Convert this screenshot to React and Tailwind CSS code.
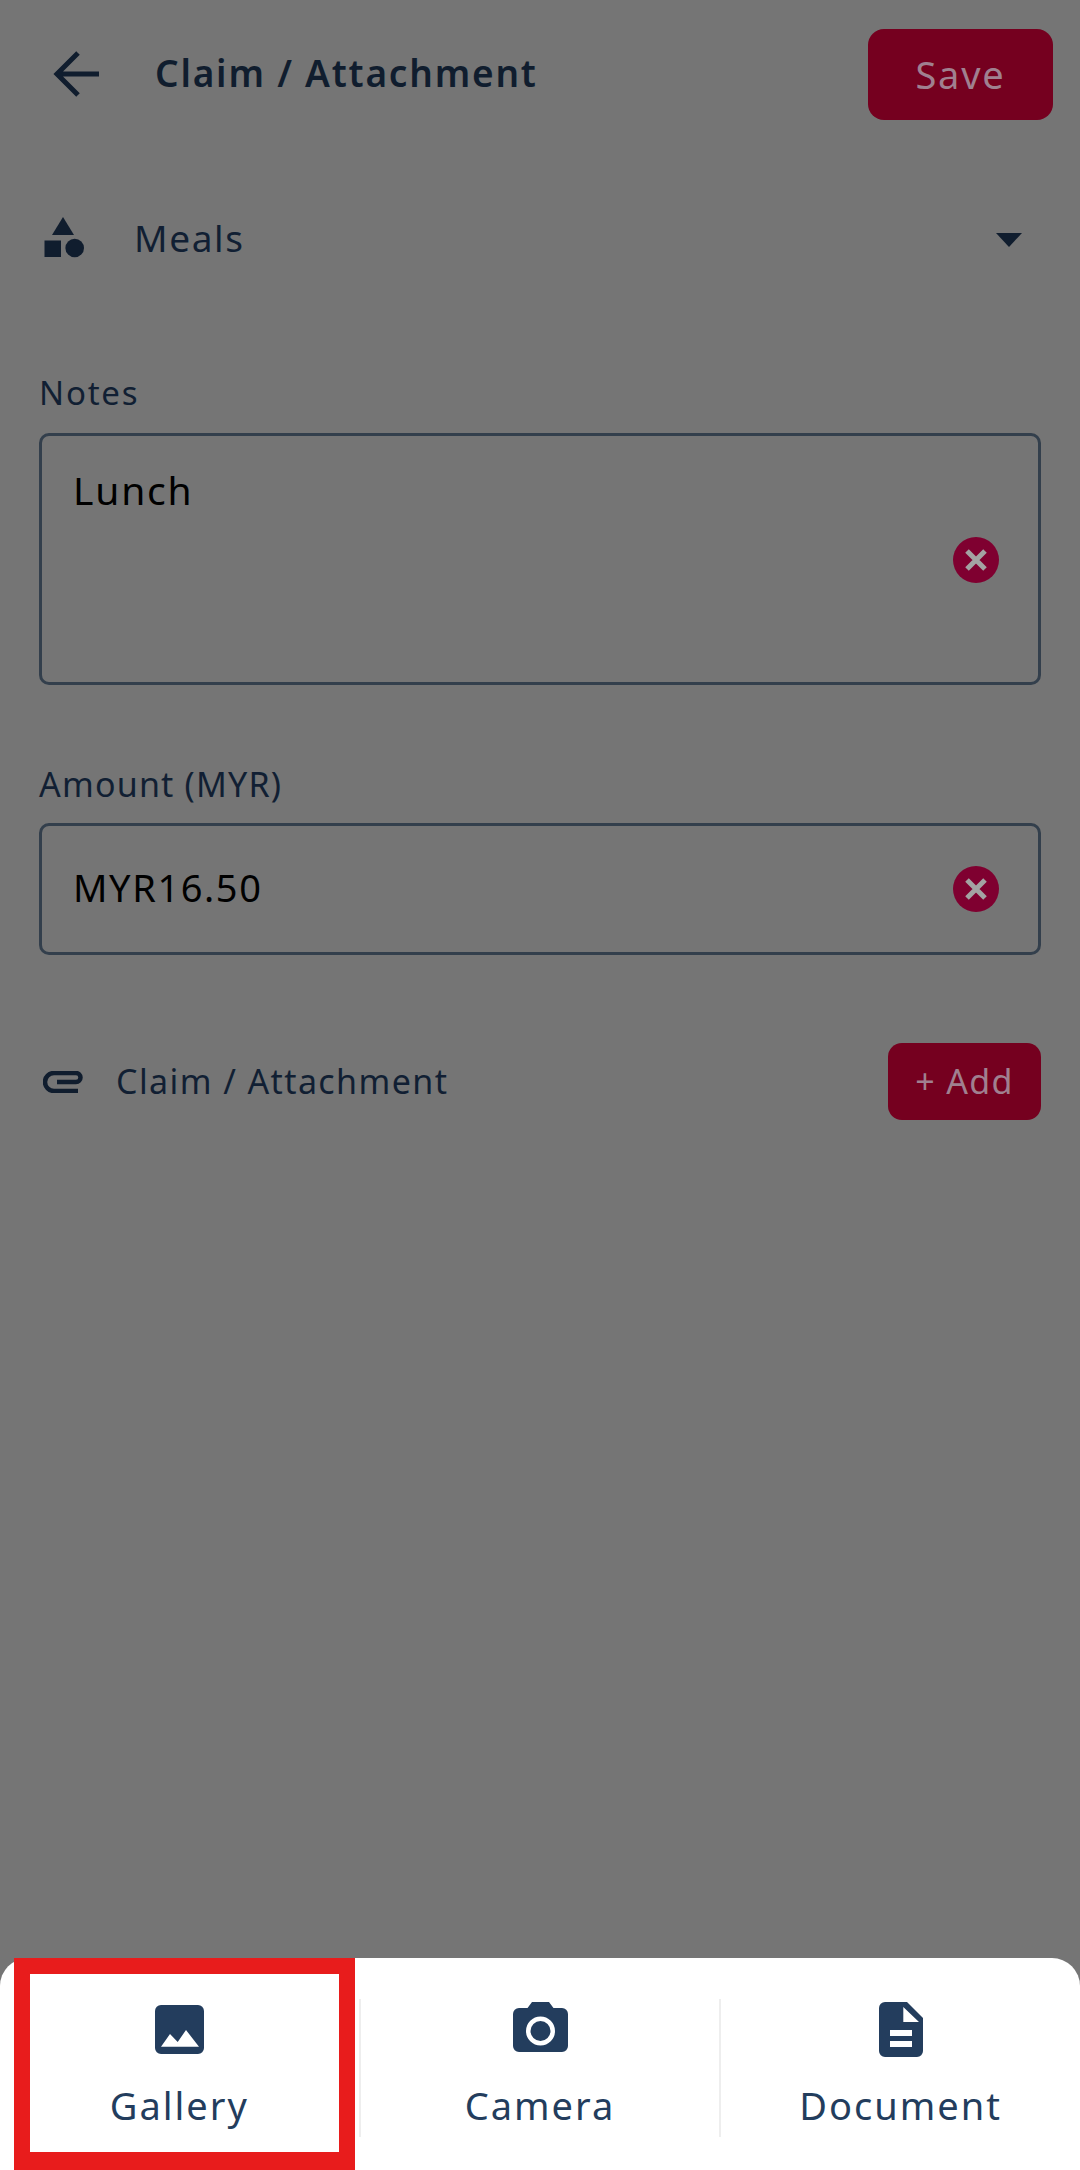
const font = { fontFamily: '"Noto Sans", "Open Sans", sans-serif' };

function ClearIcon() {
  return (
    <svg width="48" height="48" viewBox="0 0 48 48" className="shrink-0">
      <circle cx="24" cy="24" r="23" fill="#7f0030" />
      <path d="M15 15 33 33M33 15 15 33" stroke="#a3a3a3" strokeWidth="5" fill="none" />
    </svg>
  );
}

function SheetItem({ icon, label }) {
  return (
    <div className="flex-1 flex flex-col items-center">
      <div className="h-[60px] flex items-center justify-center">{icon}</div>
      <span className="mt-[23px] text-[38px] leading-[46px] tracking-[2px] text-[#233d5d]">{label}</span>
    </div>
  );
}

export default function App() {
  return (
    <div style={font} className="relative w-[1080px] h-[2170px] bg-[#757575] flex flex-col overflow-hidden">
      <header className="h-[149px] pt-[29px] pl-[52px] pr-[27px] flex items-start">
        <svg width="50" height="50" viewBox="0 0 50 50" className="mt-[20px]">
          <path d="M47 25H6M26 4 5 25l21 21" stroke="#101d2e" strokeWidth="5" fill="none" />
        </svg>
        <h1 className="ml-[53px] mt-[21px] text-[37px] leading-[46px] font-semibold tracking-[1.8px] text-[#101d2e]">Claim / Attachment</h1>
        <button className="ml-auto w-[185px] h-[91px] rounded-[16px] bg-[#75001f] text-[#a08090] text-[38px] tracking-[1.8px]">Save</button>
      </header>

      <div className="mt-[64px] h-[50px] pl-[44px] pr-[58px] flex items-center">
        <svg width="42" height="42" viewBox="0 0 42 42">
          <path d="M19 0 30 18H8z" fill="#101d2e" />
          <rect x="0.5" y="23.500" width="16.500" height="16.500" fill="#101d2e" />
          <circle cx="30.700" cy="31" r="9.300" fill="#101d2e" />
        </svg>
        <span className="ml-[48px] text-[37px] leading-[46px] tracking-[1.6px] text-[#111f33]">Meals</span>
        <svg width="26" height="14" viewBox="0 0 26 14" className="ml-auto mt-[4px]">
          <path d="M0 0h26L13 14z" fill="#101d2e" />
        </svg>
      </div>

      <label className="mt-[110px] ml-[39px] text-[33px] leading-[40px] tracking-[1.800px] text-[#111f33]">Notes</label>
      <div className="mt-[20px] mx-[39px] h-[252px] rounded-[10px] border-[3px] border-[#333f4c] pl-[31px] pr-[40px] pt-[29px] flex">
        <span className="text-[39px] leading-[50px] tracking-[1.800px] text-black">Lunch</span>
        <div className="ml-auto mt-[71px] h-[48px] mr-[-2px]"><ClearIcon /></div>
      </div>

      <label className="mt-[79px] ml-[39px] text-[34px] leading-[40px] tracking-[1.200px] text-[#111f33]">Amount (MYR)</label>
      <div className="mt-[19px] mx-[39px] h-[132px] rounded-[10px] border-[3px] border-[#333f4c] pl-[31px] pr-[40px] flex items-center">
        <span className="-mt-[4px] text-[38px] leading-[50px] tracking-[1.600px] text-black">MYR16.50</span>
        <div className="ml-auto h-[48px] mr-[-2px]"><ClearIcon /></div>
      </div>

      <div className="mt-[88px] ml-[43px] mr-[39px] flex items-center h-[77px]">
        <svg width="42" height="22" viewBox="0 0 42 22">
          <path d="M35 20H11A9 9 0 0 1 11 2H33A4.500 4.500 0 0 1 33 11H14" stroke="#101d2e" strokeWidth="4.500" fill="none" />
        </svg>
        <span className="-mt-[2px] ml-[31px] text-[34px] leading-[40px] tracking-[1.400px] text-[#111f33]">Claim / Attachment</span>
        <button className="ml-auto w-[153px] h-[77px] rounded-[14px] bg-[#75001f] text-[#a08090] text-[34px] tracking-[1.300px]">+ Add</button>
      </div>

      <div className="mt-auto h-[212px] bg-white rounded-t-[28px] pt-[41px] flex items-start">
        <SheetItem
          label="Gallery"
          icon={
            <svg width="49" height="49" viewBox="0 0 49 49"><path fill="#233d5d" fillRule="evenodd" d="M6 0h37a6 6 0 0 1 6 6v37a6 6 0 0 1-6 6H6a6 6 0 0 1-6-6V6a6 6 0 0 1 6-6zM6 41.700h38L31 25l-8.300 12L15 29z" /></svg>
          }
        />
        <div className="w-[2px] h-[138px] bg-[#eeeeee]" />
        <SheetItem
          label="Camera"
          icon={
            <svg width="55" height="50" viewBox="0 0 55 50" className="-mt-[4px]"><path fill="#233d5d" fillRule="evenodd" d="M19 0h17l4.500 6H49a6 6 0 0 1 6 6v32a6 6 0 0 1-6 6H6a6 6 0 0 1-6-6V12a6 6 0 0 1 6-6h8.500zM27.500 14.500a14.500 14.500 0 1 0 0 29 14.500 14.500 0 0 0 0-29zm0 4.500a10 10 0 1 1 0 20 10 10 0 0 1 0-20z" /></svg>
          }
        />
        <div className="w-[2px] h-[138px] bg-[#eeeeee]" />
        <SheetItem
          label="Document"
          icon={
            <svg width="44" height="55" viewBox="0 0 44 55"><path fill="#233d5d" fillRule="evenodd" d="M6 0h22l16 16v33a6 6 0 0 1-6 6H6a6 6 0 0 1-6-6V6a6 6 0 0 1 6-6zm18.300 5v15H40zM11 28v6h22v-6zm0 11v6h22v-6z" /></svg>
          }
        />
      </div>

      <div className="absolute left-[14px] top-[1958px] w-[341px] h-[212px] border-[16px] border-b-[18px] border-[#e81c1c]" />
    </div>
  );
}
